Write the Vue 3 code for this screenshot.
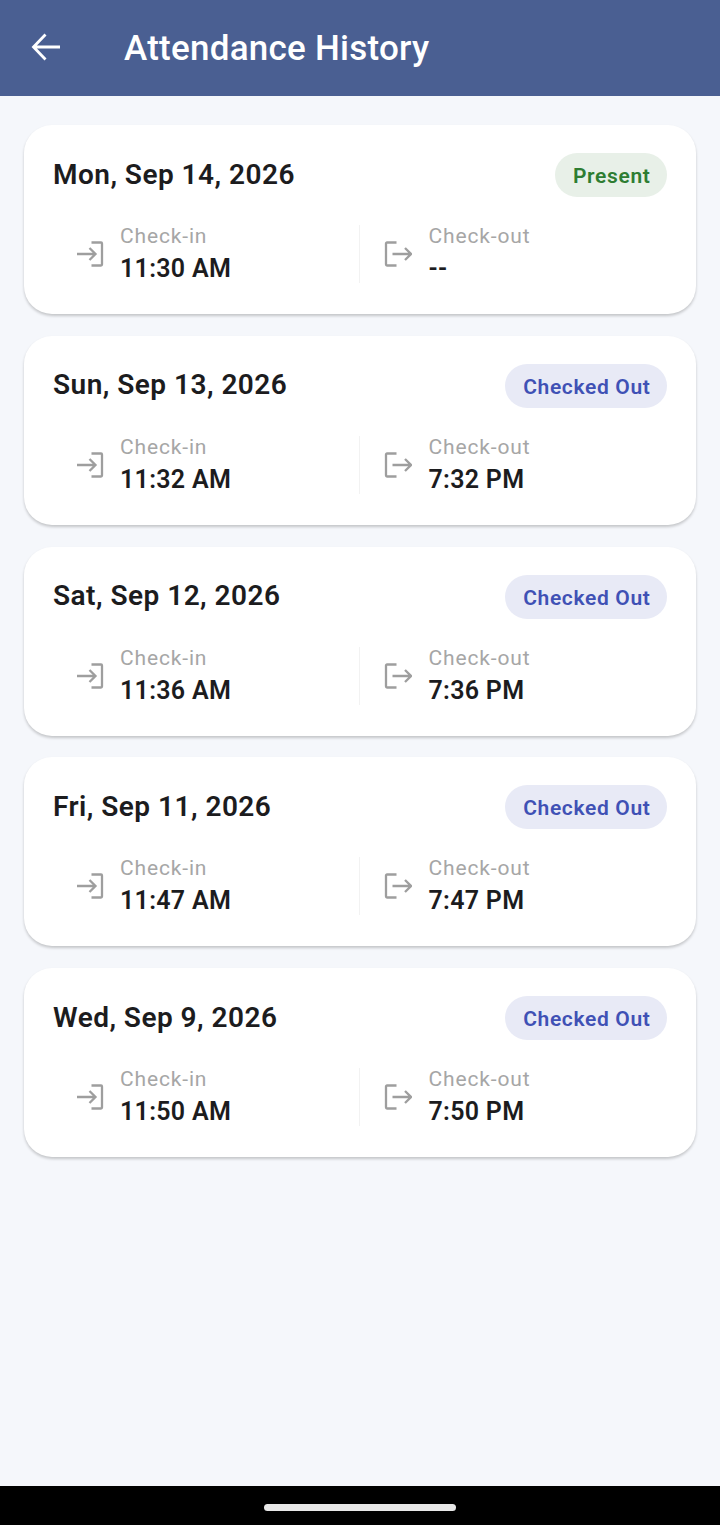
<script setup>
const records = [
  { date: 'Mon, Sep 14, 2026', status: 'Present', checkIn: '11:30 AM', checkOut: '--' },
  { date: 'Sun, Sep 13, 2026', status: 'Checked Out', checkIn: '11:32 AM', checkOut: '7:32 PM' },
  { date: 'Sat, Sep 12, 2026', status: 'Checked Out', checkIn: '11:36 AM', checkOut: '7:36 PM' },
  { date: 'Fri, Sep 11, 2026', status: 'Checked Out', checkIn: '11:47 AM', checkOut: '7:47 PM' },
  { date: 'Wed, Sep 9, 2026', status: 'Checked Out', checkIn: '11:50 AM', checkOut: '7:50 PM' },
];
</script>

<template>
  <div class="screen">
    <header class="app-bar">
      <svg class="back" width="32" height="32" viewBox="0 0 32 32">
        <path d="M30 16H3.500M15.500 3.500L3.500 16L15.500 28.500" fill="none" stroke="#fff" stroke-width="2.800" />
      </svg>
      <h1>Attendance History</h1>
    </header>

    <main class="list">
      <section v-for="rec in records" :key="rec.date" class="card">
        <div class="card-top">
          <h2>{{ rec.date }}</h2>
          <span class="badge" :class="rec.status === 'Present' ? 'present' : 'out'">{{ rec.status }}</span>
        </div>
        <div class="times">
          <div class="time-col">
            <svg class="icon" width="28" height="26" viewBox="0 0 28 26">
              <path d="M1 13H19.500M13.500 7L19.500 13L13.500 19M15.500 1.500H25a1 1 0 0 1 1 1V23.500a1 1 0 0 1-1 1H15.500" fill="none" stroke="#9e9e9e" stroke-width="2.300" />
            </svg>
            <div class="time-text">
              <span class="label">Check-in</span>
              <span class="value">{{ rec.checkIn }}</span>
            </div>
          </div>
          <div class="divider"></div>
          <div class="time-col col-out">
            <svg class="icon" width="28" height="26" viewBox="0 0 28 26">
              <path d="M12.500 1.500H3a1 1 0 0 0-1 1V23.500a1 1 0 0 0 1 1H12.500M8.500 13H27M21 7L27 13L21 19" fill="none" stroke="#9e9e9e" stroke-width="2.300" />
            </svg>
            <div class="time-text">
              <span class="label">Check-out</span>
              <span class="value">{{ rec.checkOut }}</span>
            </div>
          </div>
        </div>
      </section>
    </main>

    <footer class="nav-bar"><div class="handle"></div></footer>
  </div>
</template>

<style scoped>
.screen {
  width: 720px;
  height: 1525px;
  display: flex;
  flex-direction: column;
  background: #f5f7fb;
  font-family: Roboto, "Liberation Sans", sans-serif;
  overflow: hidden;
}

.app-bar {
  height: 96px;
  flex: none;
  display: flex;
  align-items: center;
  padding-left: 30px;
  background: #4a5f92;
  color: #fff;
}

.back {
  flex: none;
  margin-bottom: 2px;
}

.app-bar h1 {
  margin: 0 0 0 62px;
  font-size: 35px;
  font-weight: 500;
  letter-spacing: 0.25px;
}

.list {
  flex: 1;
  display: flex;
  flex-direction: column;
  gap: 21.75px;
  padding: 29px 24px 0;
}

.card {
  height: 189px;
  box-sizing: border-box;
  padding: 28px 29px 0;
  background: #fff;
  border-radius: 28px;
  box-shadow: 0 2px 3px rgba(0, 0, 0, 0.2);
}

.card-top {
  height: 44px;
  display: flex;
  justify-content: space-between;
  align-items: center;
}

.card-top h2 {
  margin: 0 0 2px;
  font-size: 28px;
  font-weight: 600;
  letter-spacing: 0.47px;
  color: #1c1c1e;
}

.badge {
  height: 44px;
  display: flex;
  align-items: center;
  padding: 2px 16.5px 0 18px;
  box-sizing: border-box;
  border-radius: 22px;
  font-size: 21px;
  font-weight: 600;
  letter-spacing: 0.65px;
}

.present {
  background: #e8f0e8;
  color: #2e7d32;
}

.out {
  background: #e8eaf6;
  color: #3f51b5;
}

.times {
  display: flex;
  margin-top: 28px;
  height: 58px;
}

.time-col {
  flex: 1;
  display: flex;
  align-items: center;
  padding-left: 23px;
}

.col-out {
  padding-left: 24px;
}

.divider {
  width: 1px;
  flex: none;
  margin-left: -1px;
  background: #f2f2f2;
}

.icon {
  flex: none;
}

.time-text {
  display: flex;
  flex-direction: column;
  margin-left: 16px;
}

.col-out .time-text {
  margin-left: 17px;
}

.label {
  font-size: 21px;
  line-height: 28px;
  letter-spacing: 0.85px;
  color: #a6a6a6;
}

.value {
  margin-top: 2px;
  font-size: 25px;
  line-height: 34px;
  font-weight: 600;
  letter-spacing: 0.3px;
  color: #1c1c1e;
}

.nav-bar {
  height: 39px;
  flex: none;
  display: flex;
  justify-content: center;
  padding-top: 18px;
  box-sizing: border-box;
  background: #000;
}

.handle {
  width: 192px;
  height: 7px;
  border-radius: 4px;
  background: #e8e8e8;
}
</style>
